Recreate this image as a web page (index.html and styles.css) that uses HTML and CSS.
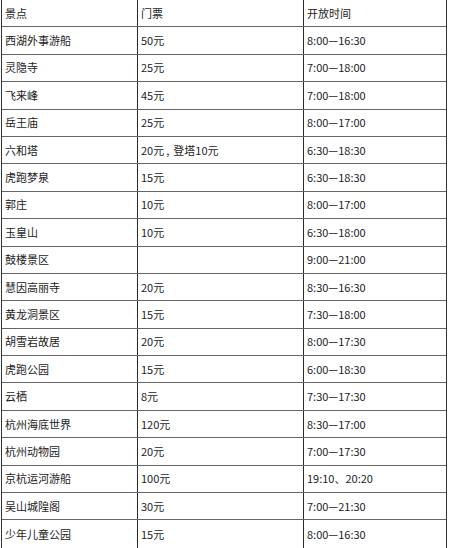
FILE: index.html
```html
<!DOCTYPE html>
<html lang="zh-CN">
<head>
<meta charset="utf-8">
<title>杭州景点门票</title>
<link rel="stylesheet" href="styles.css">
</head>
<body>
<div class="sheet">
  <div class="row head"><div class="c c1">景点</div><div class="c c2">门票</div><div class="c c3">开放时间</div></div>
  <div class="row"><div class="c c1">西湖外事游船</div><div class="c c2">50元</div><div class="c c3">8:00—16:30</div></div>
  <div class="row"><div class="c c1">灵隐寺</div><div class="c c2">25元</div><div class="c c3">7:00—18:00</div></div>
  <div class="row"><div class="c c1">飞来峰</div><div class="c c2">45元</div><div class="c c3">7:00—18:00</div></div>
  <div class="row"><div class="c c1">岳王庙</div><div class="c c2">25元</div><div class="c c3">8:00—17:00</div></div>
  <div class="row"><div class="c c1">六和塔</div><div class="c c2">20元<span class="comma">,</span>登塔10元</div><div class="c c3">6:30—18:30</div></div>
  <div class="row"><div class="c c1">虎跑梦泉</div><div class="c c2">15元</div><div class="c c3">6:30—18:30</div></div>
  <div class="row"><div class="c c1">郭庄</div><div class="c c2">10元</div><div class="c c3">8:00—17:00</div></div>
  <div class="row"><div class="c c1">玉皇山</div><div class="c c2">10元</div><div class="c c3">6:30—18:00</div></div>
  <div class="row"><div class="c c1">鼓楼景区</div><div class="c c2"></div><div class="c c3">9:00—21:00</div></div>
  <div class="row"><div class="c c1">慧因高丽寺</div><div class="c c2">20元</div><div class="c c3">8:30—16:30</div></div>
  <div class="row"><div class="c c1">黄龙洞景区</div><div class="c c2">15元</div><div class="c c3">7:30—18:00</div></div>
  <div class="row"><div class="c c1">胡雪岩故居</div><div class="c c2">20元</div><div class="c c3">8:00—17:30</div></div>
  <div class="row"><div class="c c1">虎跑公园</div><div class="c c2">15元</div><div class="c c3">6:00—18:30</div></div>
  <div class="row"><div class="c c1">云栖</div><div class="c c2">8元</div><div class="c c3">7:30—17:30</div></div>
  <div class="row"><div class="c c1">杭州海底世界</div><div class="c c2">120元</div><div class="c c3">8:30—17:00</div></div>
  <div class="row"><div class="c c1">杭州动物园</div><div class="c c2">20元</div><div class="c c3">7:00—17:30</div></div>
  <div class="row"><div class="c c1">京杭运河游船</div><div class="c c2">100元</div><div class="c c3">19:10、20:20</div></div>
  <div class="row"><div class="c c1">吴山城隍阁</div><div class="c c2">30元</div><div class="c c3">7:00—21:30</div></div>
  <div class="row last"><div class="c c1">少年儿童公园</div><div class="c c2">15元</div><div class="c c3">8:00—16:30</div></div>
</div>
</body>
</html>
```

FILE: styles.css
```css
html, body {
  margin: 0;
  padding: 0;
  background: #ffffff;
}
body {
  font-family: "Noto Sans CJK SC", "Microsoft YaHei", sans-serif;
  font-size: 11px;
  color: #1c1c1c;
  overflow: hidden;
}
.sheet {
  margin-left: 1px;
  width: 446px;
  border-left: 1px solid #333;
  border-right: 1px solid #333;
  box-sizing: border-box;
}
.row {
  display: grid;
  grid-template-columns: 135px 166px 1fr;
  height: 27.4px;
  box-sizing: border-box;
  border-bottom: 1px solid #666;
}
.row.last {
  border-bottom: none;
}
.c {
  display: flex;
  align-items: center;
  padding-left: 3px;
  white-space: nowrap;
  line-height: 1;
}
.c2, .c3 {
  border-left: 1px solid #2a2a2a;
}
.comma {
  margin: 0 4px 0 2px;
}
```
